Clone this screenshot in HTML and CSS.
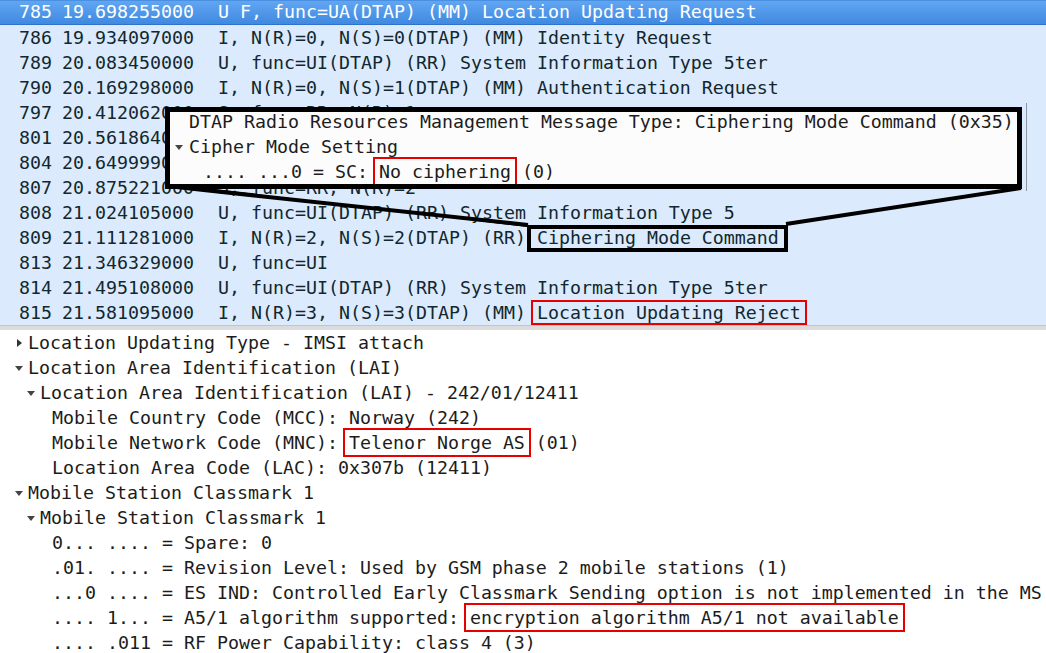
FILE: index.html
```html
<!DOCTYPE html>
<html>
<head>
<meta charset="utf-8">
<link rel="stylesheet" href="styles.css">
</head>
<body>
<div class="page">
  <div class="packet-list">
    <div class="row selected"><span class="no">785</span><span class="time">19.698255000</span><span class="info">U F, func=UA(DTAP) (MM) Location Updating Request</span></div>
    <div class="row"><span class="no">786</span><span class="time">19.934097000</span><span class="info">I, N(R)=0, N(S)=0(DTAP) (MM) Identity Request</span></div>
    <div class="row"><span class="no">789</span><span class="time">20.083450000</span><span class="info">U, func=UI(DTAP) (RR) System Information Type 5ter</span></div>
    <div class="row"><span class="no">790</span><span class="time">20.169298000</span><span class="info">I, N(R)=0, N(S)=1(DTAP) (MM) Authentication Request</span></div>
    <div class="row"><span class="no">797</span><span class="time">20.412062000</span><span class="info">S, func=RR, N(R)=1</span></div>
    <div class="row"><span class="no">801</span><span class="time">20.561864000</span><span class="info">U, func=UI(DTAP) (RR) System Information Type 5</span></div>
    <div class="row"><span class="no">804</span><span class="time">20.649999000</span><span class="info">U, func=UI(DTAP) (RR) System Information Type 6</span></div>
    <div class="row"><span class="no">807</span><span class="time">20.875221000</span><span class="info">S, func=RR, N(R)=2</span></div>
    <div class="row"><span class="no">808</span><span class="time">21.024105000</span><span class="info">U, func=UI(DTAP) (RR) System Information Type 5</span></div>
    <div class="row"><span class="no">809</span><span class="time">21.111281000</span><span class="info">I, N(R)=2, N(S)=2(DTAP) (RR) <span class="mark black">Ciphering Mode Command</span></span></div>
    <div class="row"><span class="no">813</span><span class="time">21.346329000</span><span class="info">U, func=UI</span></div>
    <div class="row"><span class="no">814</span><span class="time">21.495108000</span><span class="info">U, func=UI(DTAP) (RR) System Information Type 5ter</span></div>
    <div class="row"><span class="no">815</span><span class="time">21.581095000</span><span class="info">I, N(R)=3, N(S)=3(DTAP) (MM) <span class="mark red">Location Updating Reject</span></span></div>
  </div>
  <div class="splitter"></div>
  <div class="details">
    <div class="node l0"><span class="arrow right"></span>Location Updating Type - IMSI attach</div>
    <div class="node l0"><span class="arrow down"></span>Location Area Identification (LAI)</div>
    <div class="node l1"><span class="arrow down"></span>Location Area Identification (LAI) - 242/01/12411</div>
    <div class="node l2"><span class="arrow"></span>Mobile Country Code (MCC): Norway (242)</div>
    <div class="node l2"><span class="arrow"></span>Mobile Network Code (MNC): <span class="mark red">Telenor Norge AS</span> (01)</div>
    <div class="node l2"><span class="arrow"></span>Location Area Code (LAC): 0x307b (12411)</div>
    <div class="node l0"><span class="arrow down"></span>Mobile Station Classmark 1</div>
    <div class="node l1"><span class="arrow down"></span>Mobile Station Classmark 1</div>
    <div class="node l2"><span class="arrow"></span>0... .... = Spare: 0</div>
    <div class="node l2"><span class="arrow"></span>.01. .... = Revision Level: Used by GSM phase 2 mobile stations (1)</div>
    <div class="node l2"><span class="arrow"></span>...0 .... = ES IND: Controlled Early Classmark Sending option is not implemented in the MS</div>
    <div class="node l2"><span class="arrow"></span>.... 1... = A5/1 algorithm supported: <span class="mark red">encryption algorithm A5/1 not available</span></div>
    <div class="node l2"><span class="arrow"></span>.... .011 = RF Power Capability: class 4 (3)</div>
  </div>

  <svg class="callout-lines" width="1046" height="653" viewBox="0 0 1046 653">
    <polygon points="165,183 170,186 529,225 527,227" fill="#000"/>
    <line x1="167" y1="186" x2="528" y2="225" stroke="#000" stroke-width="4"/>
    <line x1="1021" y1="188" x2="786" y2="224" stroke="#000" stroke-width="4"/>
  </svg>
  <div class="zoom-edge"></div>
  <div class="zoom-box">
    <div class="zoom-inner">
      <div class="zline z0">DTAP Radio Resources Management Message Type: Ciphering Mode Command (0x35)</div>
      <div class="zline z1"><span class="arrow down"></span>Cipher Mode Setting</div>
      <div class="zline z2">.... ...0 = SC: <span class="mark red">No ciphering</span> (0)</div>
    </div>
  </div>
</div>
</body>
</html>
```
FILE: styles.css
```css
html, body {
  margin: 0;
  padding: 0;
}
body {
  width: 1046px;
  height: 653px;
  overflow: hidden;
  background: #ffffff;
  font-family: "DejaVu Sans Mono", "Liberation Mono", monospace;
  font-size: 18.27px;
  color: #1c1c1c;
}
.page {
  position: relative;
  width: 1046px;
  height: 653px;
  overflow: hidden;
}
.packet-list {
  background: #dbebfd;
  height: 325px;
  color: #12272e;
}
.row {
  display: flex;
  height: 25px;
  line-height: 25px;
  white-space: pre;
}
.row.selected {
  background: linear-gradient(#62a6f2, #3f89e0);
  border-top: 1px solid #4a8fe0;
  border-bottom: 1px solid #2f72cc;
  height: 23px;
  line-height: 22px;
  color: #ffffff;
}
.no {
  width: 52px;
  text-align: right;
  flex: none;
}
.time {
  width: 166px;
  padding-left: 10px;
  box-sizing: border-box;
  flex: none;
}
.info {
  flex: none;
}
.splitter {
  height: 5px;
  background: #dcdcdc;
  border-top: 1px solid #c4c4c4;
  box-sizing: border-box;
}
.details {
  background: #ffffff;
}
.node {
  display: flex;
  align-items: center;
  height: 25px;
  line-height: 25px;
  white-space: pre;
}
.l0 { padding-left: 15px; }
.l1 { padding-left: 27px; }
.l2 { padding-left: 40px; }
.l0 .arrow, .l1 .arrow { width: 13px; }
.arrow {
  display: inline-flex;
  align-items: center;
  width: 12px;
  height: 25px;
  flex: none;
  position: relative;
}
.arrow.right::before {
  content: "";
  margin-left: 2px;
  border-left: 5px solid #333;
  border-top: 4px solid transparent;
  border-bottom: 4px solid transparent;
}
.arrow.down::before {
  content: "";
  margin-left: 0;
  margin-top: 1px;
  border-top: 5px solid #444;
  border-left: 4px solid transparent;
  border-right: 4px solid transparent;
}
.mark {
  position: relative;
}
.mark.red::after {
  content: "";
  position: absolute;
  left: -6px;
  right: -6px;
  top: -2px;
  bottom: -2px;
  border: 2px solid #e60000;
}
.mark.black::after {
  content: "";
  position: absolute;
  left: -10px;
  right: -9px;
  top: -2px;
  bottom: -4px;
  border: 4px solid #000;
}
.callout-lines {
  position: absolute;
  left: 0;
  top: 0;
  pointer-events: none;
}
.zoom-edge {
  position: absolute;
  left: 1026px;
  top: 103px;
  width: 1px;
  height: 88px;
  background: #8c96a0;
}
.zoom-box {
  position: absolute;
  left: 165px;
  top: 107px;
  width: 857px;
  height: 82px;
  box-sizing: border-box;
  border: 5px solid #000;
  background: #fcfcfc;
  overflow: hidden;
  color: #1c1c1c;
}
.zoom-inner {
  margin-top: -3px;
}
.zline {
  display: flex;
  align-items: center;
  height: 25px;
  line-height: 25px;
  white-space: pre;
}
.z0 { padding-left: 19px; }
.z1 { padding-left: 5px; }
.z1 .arrow { width: 14px; }
.z2 { padding-left: 33px; }
```
